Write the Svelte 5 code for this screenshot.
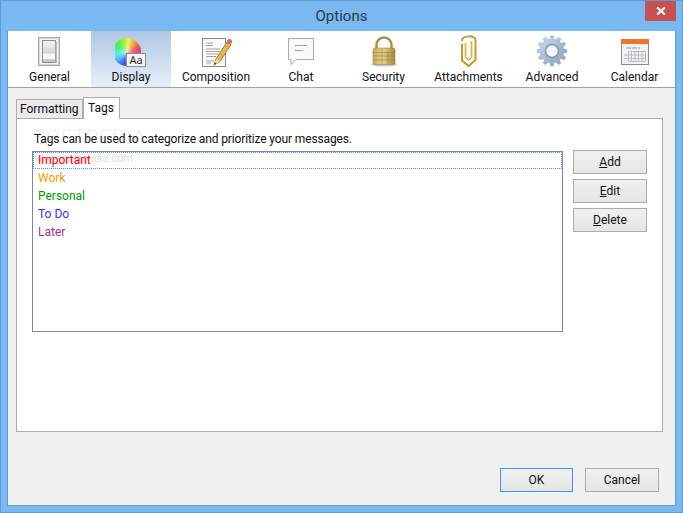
<script>
  const sections = [
    { id: 'general', label: 'General', w: 83 },
    { id: 'display', label: 'Display', w: 80, active: true },
    { id: 'composition', label: 'Composition', w: 90 },
    { id: 'chat', label: 'Chat', w: 80 },
    { id: 'security', label: 'Security', w: 85 },
    { id: 'attachments', label: 'Attachments', w: 85 },
    { id: 'advanced', label: 'Advanced', w: 82 },
    { id: 'calendar', label: 'Calendar', w: 83 }
  ];
  const tags = [
    { name: 'Important', color: '#ff0000' },
    { name: 'Work', color: '#ff9900' },
    { name: 'Personal', color: '#009900' },
    { name: 'To Do', color: '#3333ff' },
    { name: 'Later', color: '#993399' }
  ];
  const sideButtons = [['A', 'dd'], ['E', 'dit'], ['D', 'elete']];
  const wedges = Array.from({ length: 36 }, (_, i) => {
    const cx = 12, cy = 17, r = 14;
    const a0 = (i * 10 - 0.6) * Math.PI / 180, a1 = ((i + 1) * 10 + 0.6) * Math.PI / 180;
    return {
      d: `M${cx} ${cy}L${(cx + r * Math.cos(a0)).toFixed(2)} ${(cy - r * Math.sin(a0)).toFixed(2)}A${r} ${r} 0 0 0 ${(cx + r * Math.cos(a1)).toFixed(2)} ${(cy - r * Math.sin(a1)).toFixed(2)}Z`,
      fill: `hsl(${(i * 10 + 345) % 360} 85% 58%)`
    };
  });
  const gearPath = (() => {
    const cx = 16, cy = 16, teeth = 12;
    let d = '';
    for (let i = 0; i < teeth; i++) {
      const s = (i / teeth) * Math.PI * 2;
      const st = (Math.PI * 2) / teeth;
      const pts = [[11.5, s - st * 0.5], [12, s - st * 0.3], [15, s - st * 0.17], [15, s + st * 0.17], [12, s + st * 0.3]];
      for (const [r, a] of pts) {
        d += `${d ? 'L' : 'M'}${(cx + r * Math.cos(a)).toFixed(2)} ${(cy + r * Math.sin(a)).toFixed(2)}`;
      }
    }
    return d + 'Z';
  })();
</script>

<div class="window">
  <header class="titlebar">
    <span class="title">Options</span>
    <button class="close" aria-label="Close">
      <svg width="10" height="10" viewBox="0 0 10 10"><path d="M1.2 1.5L8.8 8.5M8.8 1.5L1.2 8.5" stroke="#fff" stroke-width="2.1" /></svg>
    </button>
  </header>

  <div class="client">
    <nav class="toolbar">
      {#each sections as s}
        <div class="section" class:active={s.active} style="width:{s.w}px">
          <svg class="icon" width="32" height="32" viewBox="0 0 32 32">
            {#if s.id === 'general'}
              <defs>
                <linearGradient id="sw" x1="0" y1="0" x2="0" y2="1">
                  <stop offset="0" stop-color="#f4f4f4" /><stop offset="0.58" stop-color="#d4d4d4" />
                  <stop offset="0.6" stop-color="#f0f0f0" /><stop offset="0.82" stop-color="#fafafa" /><stop offset="0.84" stop-color="#cfcfcf" /><stop offset="1" stop-color="#c4c4c4" />
                </linearGradient>
              </defs>
              <rect x="4.5" y="2.5" width="21" height="28" fill="#f3f3f3" stroke="#a8a8a8" />
              <rect x="5.5" y="3.5" width="19" height="26" fill="none" stroke="#d8d8d8" />
              <rect x="8.5" y="5.5" width="13" height="22" fill="url(#sw)" stroke="#8d8d8d" />
              <rect x="21.5" y="7" width="1.5" height="21" fill="#bbb" />
            {:else if s.id === 'display'}
              <defs>
                <radialGradient id="wh">
                  <stop offset="0" stop-color="#fff" stop-opacity="0.6" /><stop offset="0.5" stop-color="#fff" stop-opacity="0.15" /><stop offset="1" stop-color="#fff" stop-opacity="0" />
                </radialGradient>
              </defs>
              {#each wedges as w}<path d={w.d} fill={w.fill} />{/each}
              <circle cx="12" cy="17" r="14" fill="url(#wh)" />
              <rect x="11.5" y="18.5" width="19" height="13" fill="#f6f6f6" stroke="#8f8f8f" />
              <text x="21" y="29" class="aa">Aa</text>
            {:else if s.id === 'composition'}
              <rect x="2.5" y="3.5" width="23" height="28" fill="#fafafa" stroke="#8c8c8c" />
              <path d="M6 8h7M6 10.500h7M6 14h14M6 16.500h14M6 19h13M6 21.500h10M6 26h8M6 28h5" stroke="#a5a5a5" stroke-width="1" />
              <path d="M14 30l2-6L27 7l4 2.500-11 17z" fill="#e6b84a" stroke="#8a6a20" stroke-width="0.8" />
              <path d="M14 30l2-6 4 2.500z" fill="#f0d9a8" />
              <path d="M14 30l.8-2.600 1.700 1.100z" fill="#333" />
              <circle cx="29.500" cy="6.500" r="2.500" fill="#e8606a" />
            {:else if s.id === 'chat'}
              <path d="M3.500 3.500h25v21H11l-5 5v-5H3.500z" fill="#f9f9f9" stroke="#aaa" />
              <path d="M10 10.500h12M10 15.500h8" stroke="#a0a0a0" />
            {:else if s.id === 'security'}
              <defs>
                <linearGradient id="lk" x1="0" y1="0" x2="1" y2="0">
                  <stop offset="0" stop-color="#c9ad60" /><stop offset="0.45" stop-color="#e6d28e" /><stop offset="1" stop-color="#a98a3c" />
                </linearGradient>
              </defs>
              <ellipse cx="16" cy="29.500" rx="13" ry="2" fill="#aaa" opacity="0.6" />
              <path d="M8.500 13V9a7.500 7.500 0 0 1 15 0v4" transform="translate(0 1)" fill="none" stroke="#a8913f" stroke-width="2.400" />
              <rect x="5" y="13" width="22" height="16.500" rx="1.500" fill="url(#lk)" stroke="#a08438" stroke-width="0.6" />
              <path d="M5.500 17.500h21M5.500 21h21M5.500 25h21M14 13v16M20 17v12" stroke="#8f7430" stroke-width="0.7" opacity="0.7" />
            {:else if s.id === 'attachments'}
              <path d="M9 9v16.500l6.500 5.500 7-6V5c0-5-13.500-5-13.500 1" fill="none" stroke="#c49a2c" stroke-width="2" />
              <path d="M12.500 8v14l3 3 3-3V6" fill="none" stroke="#d8b64e" stroke-width="1.700" />
            {:else if s.id === 'advanced'}
              <defs>
                <linearGradient id="gr" x1="0" y1="0" x2="1" y2="1">
                  <stop offset="0" stop-color="#d3e1ee" /><stop offset="0.5" stop-color="#a6bfd6" /><stop offset="1" stop-color="#7f9cb8" />
                </linearGradient>
              </defs>
              <path d={gearPath} fill="url(#gr)" stroke="#8ba4bb" stroke-width="0.6" />
              <circle cx="16" cy="16" r="6.500" fill="#f4f7fa" stroke="#7f98ae" stroke-width="1.500" />
            {:else if s.id === 'calendar'}
              <rect x="2.500" y="4.500" width="27" height="25" fill="#f2f2f2" stroke="#8a8a8a" />
              <rect x="2" y="4" width="28" height="5" fill="#f0752c" />
              <path d="M7 13h14" stroke="#b5b5b5" stroke-width="1.500" stroke-dasharray="5 1" />
              <path d="M9.500 16.500h17v10h-17zM5 20h21.500M5 23.500h21.500M12.500 16.500v10M16 16.500v10M19.500 16.500v10M23 16.500v10" fill="none" stroke="#b4b8bf" stroke-width="0.9" />
            {/if}
          </svg>
          <span class="label">{s.label}</span>
        </div>
      {/each}
    </nav>

    <main class="content">
      <div class="tabs">
        <div class="tab">Formatting</div>
        <div class="tab current">Tags</div>
      </div>
      <section class="panel">
        <div class="wm" aria-hidden="true">SOFTPEDIA</div>
        <div class="wm2" aria-hidden="true">www.softpedia.com</div>
        <p class="hint">Tags can be used to categorize and prioritize your messages.</p>
        <div class="editor">
          <ul class="list">
            {#each tags as t, i}
              <li class:focused={i === 0} style="color:{t.color}">{t.name}</li>
            {/each}
          </ul>
          <div class="side">
            {#each sideButtons as [k, rest]}
              <button class="btn"><u>{k}</u>{rest}</button>
            {/each}
          </div>
        </div>
      </section>
      <footer class="footer">
        <button class="btn wide default">OK</button>
        <button class="btn wide">Cancel</button>
      </footer>
    </main>
  </div>
</div>

<style>
  :global(body) {
    margin: 0;
    background: #79b8f0;
  }
  .window {
    width: 683px;
    height: 513px;
    box-sizing: border-box;
    border: 1px solid #5f9bd0;
    background: #79b8f0;
    display: flex;
    flex-direction: column;
    font-family: Roboto, "Noto Sans", sans-serif;
    font-size: 12px;
    color: #111;
    overflow: hidden;
  }
  .titlebar {
    height: 30px;
    flex: none;
    position: relative;
    display: flex;
    align-items: center;
    justify-content: center;
    padding-bottom: 1px;
    box-sizing: border-box;
  }
  .title {
    font-size: 15px;
    color: #2b3a46;
  }
  .close {
    position: absolute;
    top: 0;
    left: 644px;
    width: 31px;
    height: 20px;
    border: 0;
    padding: 0;
    background: #c75050;
    display: flex;
    align-items: center;
    justify-content: center;
  }
  .client {
    flex: 1;
    margin: 0 6px 6px;
    border: 1px solid #5f9bd0;
    border-top: 0;
    background: #f0f0f0;
    display: flex;
    flex-direction: column;
    min-height: 0;
  }
  .toolbar {
    height: 56px;
    flex: none;
    display: flex;
    background: #fff;
    border-bottom: 1px solid #a2a2a2;
  }
  .section {
    flex: none;
    display: flex;
    flex-direction: column;
    align-items: center;
    padding-top: 4px;
    box-sizing: border-box;
  }
  .section.active {
    background: linear-gradient(#b0c6e2, #e6f0fa);
  }
  .icon {
    display: block;
    flex: none;
  }
  .aa {
    font-family: "Noto Sans", sans-serif;
    font-size: 11px;
    text-anchor: middle;
    fill: #333;
  }
  .label {
    line-height: 16px;
    margin-top: 2px;
    white-space: nowrap;
  }
  .content {
    flex: 1;
    display: flex;
    flex-direction: column;
    padding: 9px 12px 12px 8px;
    min-height: 0;
  }
  .tabs {
    display: flex;
    align-items: flex-end;
    height: 21px;
    flex: none;
    position: relative;
    z-index: 1;
  }
  .tab {
    box-sizing: border-box;
    height: 19px;
    line-height: 19px;
    padding: 0 3px;
    width: 67px;
    background: #ebebeb;
    border: 1px solid #acacac;
    border-bottom: 0;
    white-space: nowrap;
  }
  .tab.current {
    height: 22px;
    width: 37px;
    line-height: 20px;
    background: #fff;
    padding: 0 4px;
    margin-bottom: -1px;
    position: relative;
  }
  .panel {
    position: relative;
    box-sizing: border-box;
    height: 314px;
    flex: none;
    background: #fff;
    border: 1px solid #acacac;
    padding: 11px 15px 0 15px;
  }
  .hint {
    position: relative;
    margin: 0 0 3px 2px;
    line-height: 18px;
    letter-spacing: -0.13px;
  }
  .editor {
    position: relative;
    display: flex;
    gap: 10px;
    align-items: flex-start;
  }
  .list {
    list-style: none;
    margin: 0;
    padding: 0;
    box-sizing: border-box;
    width: 531px;
    height: 181px;
    border: 1px solid #828790;
  }
  .list li {
    box-sizing: border-box;
    height: 17px;
    margin-bottom: 1px;
    line-height: 17px;
    padding: 0 5px;
  }
  .list li.focused {
    background:
      repeating-linear-gradient(90deg, #3399ff 0 1px, transparent 1px 2px) top / 100% 1px no-repeat,
      repeating-linear-gradient(90deg, #3399ff 0 1px, transparent 1px 2px) bottom / 100% 1px no-repeat,
      repeating-linear-gradient(0deg, #3399ff 0 1px, transparent 1px 2px) left / 1px 100% no-repeat,
      repeating-linear-gradient(0deg, #3399ff 0 1px, transparent 1px 2px) right / 1px 100% no-repeat;
  }
  .side {
    display: flex;
    flex-direction: column;
    gap: 5px;
    margin-top: -1px;
  }
  .btn {
    box-sizing: border-box;
    width: 74px;
    height: 24px;
    padding: 0;
    border: 1px solid #acacac;
    background: linear-gradient(#f0f0f0, #e5e5e5);
    font: inherit;
    color: #111;
    text-align: center;
    line-height: 20px;
  }
  .footer {
    flex: none;
    display: flex;
    justify-content: flex-end;
    gap: 12px;
    margin-top: 36px;
    margin-right: 4px;
  }
  .wide {
    height: 24px;
  }
  .default {
    width: 73px;
    border-color: #3399ff;
  }
  .wm {
    position: absolute;
    left: 16px;
    top: 6px;
    font-size: 20px;
    letter-spacing: 1px;
    color: #f3f3f3;
  }
  .wm2 {
    position: absolute;
    left: 18px;
    top: 33px;
    font-size: 11px;
    color: #dcdcdc;
  }
</style>
